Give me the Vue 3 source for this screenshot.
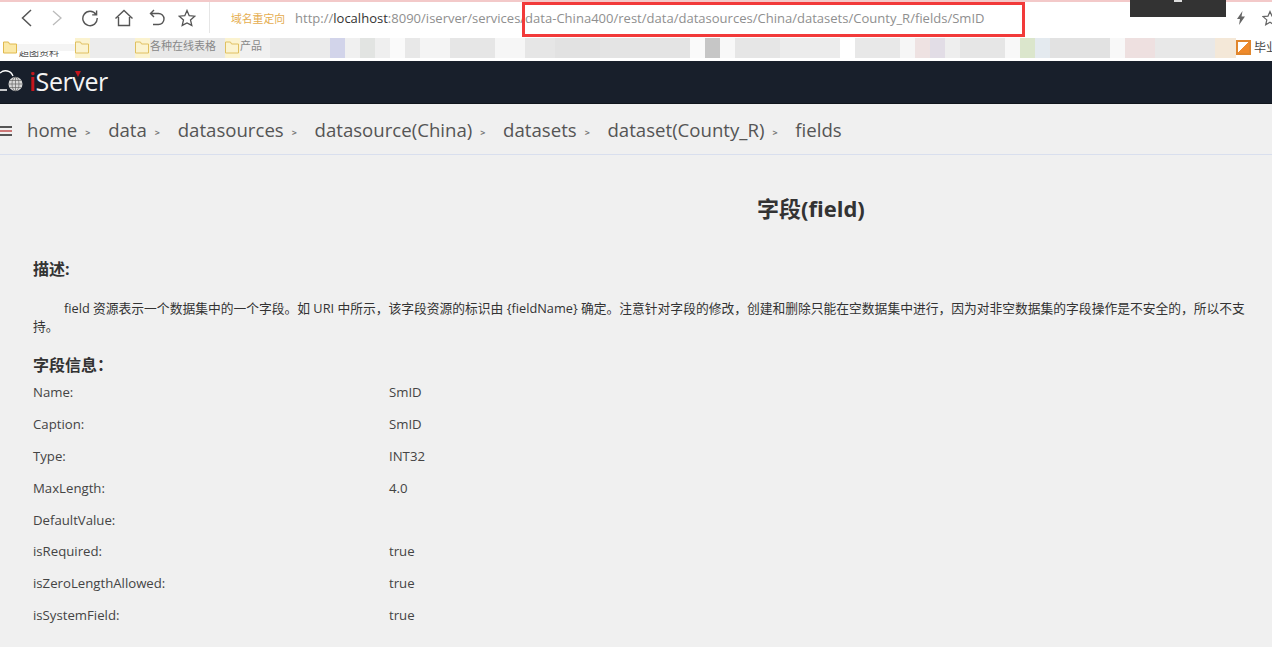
<script setup>
const mosaicA = [
  [15,'#fbf3d0','folder'],[45,'#ececec'],[15,'#fbf3d0','folder'],[75,'#e8e8e8','各种在线表格'],[15,'#fbf3d0','folder'],[30,'#f0f0f0','产品'],[30,'#e8e8e8'],[30,'#ebebeb'],
  [15,'#d2d4ea'],[15,'#f0f0f0'],[15,'#e2e4e2'],[15,'#efefef'],[15,'#fafafa'],[15,'#e8e8e8'],[30,'#f4f4f4'],[45,'#e6e6e6'],[30,'#f6f6f6'],[30,'#e6e6e6'],[45,'#e2e2e2'],[90,'#e4e4e4'],[15,'#fafafa'],[15,'#c6c6c6'],[15,'#f8f8f8'],[45,'#e6e6e6'],[60,'#ececec'],[15,'#fff'],[45,'#e8e8e8'],[15,'#f6f6f6'],[15,'#eee2e2'],[15,'#e2dde6'],[15,'#eee'],[45,'#e6e6e6'],[15,'#f8f8f8'],[15,'#dbe6cc'],[15,'#e4eaef'],[60,'#e2e2e2'],[15,'#f8f8f8'],[30,'#eee0e0'],[60,'#e8e8e8'],[21,'#f4e8d8']
]
const fields = [
  ['Name:','SmID'],['Caption:','SmID'],['Type:','INT32'],['MaxLength:','4.0'],['DefaultValue:',''],['isRequired:','true'],['isZeroLengthAllowed:','true'],['isSystemField:','true']
]
const crumbs = ['home','data','datasources','datasource(China)','datasets','dataset(County_R)']
</script>

<template>
  <div class="page">
    <div class="browser">
      <div class="toolbar">
        <div class="navicons">
          <svg width="14" height="18" viewBox="0 0 14 18" class="ic"><path d="M12 1 3.500 9l8.500 8" fill="none" stroke="#555" stroke-width="1.500"/></svg>
          <svg width="14" height="18" viewBox="0 0 14 18" class="ic"><path d="M3 2l8 7-8 7" fill="none" stroke="#bbb" stroke-width="1.300"/></svg>
          <svg width="18" height="18" viewBox="0 0 18 18" class="ic reload"><path d="M15 5.500A7.200 7.200 0 1 0 16.200 9M15.600 1.500v4.400h-4.400" fill="none" stroke="#555" stroke-width="1.400"/></svg>
          <svg width="20" height="18" viewBox="0 0 20 18" class="ic home"><path d="M1.500 9.500 10 1.500l8.500 8M4.500 8v8.500h11V8" fill="none" stroke="#555" stroke-width="1.400"/></svg>
          <svg width="16" height="18" viewBox="0 0 16 18" class="ic undo"><path d="M5 1 1.500 4.500 5 8M1.500 4.500h8a5 5 0 0 1 0 11H4" fill="none" stroke="#555" stroke-width="1.400"/></svg>
          <svg width="18" height="18" viewBox="0 0 18 18" class="ic star"><path d="m9 1.500 2.200 5.200 5.600.5-4.300 3.700 1.300 5.500L9 13.900l-4.800 2.500 1.300-5.500L1.200 7.200l5.600-.5z" fill="none" stroke="#555" stroke-width="1.300"/></svg>
        </div>
        <div class="address">
          <span class="redirect">域名重定向</span>
          <span class="url"><span>http://</span><span class="host">localhost</span><span>:8090/iserver/services/data-China400/rest/data/datasources/China/datasets/County_R/fields/SmID</span></span>
        </div>
        <div class="rightic">
          <svg width="10" height="14" viewBox="0 0 10 14"><path d="M6.500 0 1 8h3l-1 6 6-8.500H5.500z" fill="#666"/></svg>
          <svg width="16" height="16" viewBox="0 0 16 16"><path d="m8 1.500 2 4.600 5 .5-3.800 3.300 1.100 4.900L8 12.300l-4.300 2.500 1.100-4.900L1 6.600l5-.5z" fill="none" stroke="#666" stroke-width="1.200"/></svg>
        </div>
      </div>
      <div class="bookmarks">
        <svg class="folder" width="14" height="13" viewBox="0 0 14 13"><path d="M.5 12V1h5l1 2h7v9z" fill="#fbe9a8" stroke="#e0b94e"/></svg>
        <span class="bm-text">超图资料</span>
        <div class="mosaic">
          <i v-for="(m, i) in mosaicA" :key="i" class="tile" :style="{ width: m[0] + 'px', background: m[1] }">
            <svg v-if="m[2] === 'folder'" class="tilefolder" width="14" height="13" viewBox="0 0 14 13"><path d="M.5 12V1h5l1 2h7v9z" fill="none" stroke="#e0c060"/></svg>
            <span v-else-if="m[2]" class="tiletext">{{ m[2] }}</span>
          </i>
        </div>
        <span class="bm-end"><b class="endicon"></b>毕业</span>
      </div>
    </div>
    <header class="appbar">
      <svg width="24" height="26" viewBox="0 0 24 26" class="logo-cloud"><path d="M7 21H-3M13 7a8 8 0 0 0-13-3" fill="none" stroke="#fff" stroke-width="1.300"/><circle cx="15.500" cy="15" r="7" fill="#d8d8d8"/><path d="M8.500 15h14M9.500 11.500h12M9.500 18.500h12M15.500 8v14" stroke="#666" stroke-width=".7"/><ellipse cx="15.500" cy="15" rx="3.500" ry="7" fill="none" stroke="#666" stroke-width=".7"/></svg>
      <span class="brand"><em>i</em>Ser<span class="v">v</span>er</span>
    </header>
    <nav class="crumbbar">
      <span class="menuicon"><i></i><i class="red"></i><i></i></span>
      <template v-for="c in crumbs" :key="c">
        <span class="crumb">{{ c }}</span><span class="sep">&gt;</span>
      </template>
      <span class="crumb">fields</span>
    </nav>
    <main class="content">
      <h1>字段(field)</h1>
      <h2 class="desc-title">描述:</h2>
      <p class="desc">field 资源表示一个数据集中的一个字段。如 URI 中所示，该字段资源的标识由 {fieldName} 确定。注意针对字段的修改，创建和删除只能在空数据集中进行，因为对非空数据集的字段操作是不安全的，所以不支持。</p>
      <h2 class="info-title">字段信息：</h2>
      <div class="fields">
        <div v-for="f in fields" :key="f[0]" class="row">
          <span class="key">{{ f[0] }}</span><span class="val">{{ f[1] }}</span>
        </div>
      </div>
    </main>
    <div class="redbox"></div>
    <div class="darkbox"><i></i></div>
  </div>
</template>

<style scoped>
.page { position: relative; width: 1272px; height: 647px; overflow: hidden; background: #f0f0f0; font-family: "Open Sans", "Noto Sans CJK SC", sans-serif; color: #333; }
.browser { height: 61px; background: #fff; border-top: 2px solid #f3c9c9; box-sizing: border-box; }
.toolbar { height: 31px; display: flex; align-items: center; background: #fff; }
.navicons { width: 210px; height: 100%; box-sizing: border-box; padding-left: 19px; display: flex; align-items: center; gap: 17px; border-right: 1px solid #e6e6e6; }
.ic { flex: none; }
.home { margin-left: -2px; }
.undo { margin-left: -2px; }
.star { margin-left: -4px; }
.address { flex: 1; display: flex; align-items: center; padding-left: 21px; height: 100%; }
.redirect { font-size: 10.800px; color: #e5ad4f; width: 64px; flex: none; white-space: nowrap; }
.url { font-family: "Open Sans", sans-serif; font-size: 13.040px; color: #8f8f8f; white-space: nowrap; }
.host { color: #333; }
.rightic { position: relative; left: 6px; width: 42px; display: flex; align-items: center; gap: 16px; flex: none; }
.bookmarks { height: 28px; display: flex; align-items: center; padding-left: 3px; background: #fff; position: relative; font-size: 11px; color: #555; overflow: hidden; }
.folder { flex: none; }
.bm-text { position: relative; width: 58px; flex: none; white-space: nowrap; overflow: hidden; font-size: 10px; margin-top: 8px; padding-left: 2px; box-sizing: border-box; }
.bm-text::before { content: ""; position: absolute; left: 0; right: 0; top: 0; height: 7px; background: #f4f4f4; }
.mosaic { display: flex; height: 20px; align-items: stretch; margin-top: 2px; width: 1161px; flex: none; overflow: hidden; }
.tile { display: block; flex: none; font-style: normal; overflow: hidden; white-space: nowrap; font-size: 11px; line-height: 14px; color: #888; }
.tilefolder { display: block; margin-top: 3px; }
.tiletext { display: block; height: 15px; margin-top: 1px; }
.bm-end { display: flex; align-items: center; gap: 3px; font-size: 12px; color: #444; flex: none; white-space: nowrap; }
.endicon { width: 15px; height: 15px; background: linear-gradient(135deg, #fff 50%, #ef8a2b 50%); border: 2px solid #e0862d; box-sizing: border-box; flex: none; }
.appbar { height: 43px; background: #181f2b; display: flex; align-items: center; border-bottom: 1px solid #10151c; box-sizing: border-box; }
.logo-cloud { flex: none; overflow: visible; }
.brand { font-family: "Open Sans", sans-serif; font-size: 25px; color: #f4f4f4; margin-left: 5px; margin-bottom: 2px; letter-spacing: -.4px; line-height: 1; }
.brand em { font-style: normal; color: #c4161c; font-weight: 600; }
.v { position: relative; }
.v::before { content: ""; position: absolute; left: 3px; top: 7px; border: 3px solid transparent; border-top: 6px solid #c4161c; border-bottom: 0; }
.crumbbar { height: 51px; box-sizing: border-box; border-bottom: 1px solid #d9dfee; display: flex; align-items: center; background: #f0f0f0; }
.menuicon { width: 12px; height: 10px; margin-right: 15px; margin-top: 3px; display: flex; flex-direction: column; justify-content: space-between; flex: none; }
.menuicon i { display: block; height: 2px; background: #555; }
.menuicon i.red { background: #c77; }
.crumb { font-size: 18.620px; color: #555; white-space: nowrap; }
.sep { font-size: 9px; font-weight: 700; color: #777; margin: 7px 17.700px 0 8px; }
.content { padding: 0 20px 0 33px; }
h1 { margin: 40px 0 0; height: 27px; padding-left: 724px; font-size: 22px; line-height: 27px; font-weight: 700; color: #333; white-space: nowrap; }
h2 { font-size: 16px; font-weight: 700; margin: 0; color: #333; line-height: 20px; }
.desc-title { margin-top: 37px; }
.desc { margin: 20px 0 0; text-indent: 31px; font-size: 12.770px; line-height: 18px; color: #333; }
.info-title { margin-top: 20px; }
.fields { margin-top: 1px; }
.row { height: 31.900px; display: flex; align-items: center; font-size: 13.200px; color: #444; }
.key { width: 356px; flex: none; }
.redbox { position: absolute; left: 522px; top: 2px; width: 503px; height: 35px; box-sizing: border-box; border: 3px solid #f23a3a; }
.darkbox { position: absolute; left: 1130px; top: 0; width: 96px; height: 17px; background: #333; }
.darkbox i { position: absolute; left: 44px; top: -2px; width: 8px; height: 4px; background: #ddd; }
</style>

<style>
html, body { margin: 0; background: #f0f0f0; }
</style>
